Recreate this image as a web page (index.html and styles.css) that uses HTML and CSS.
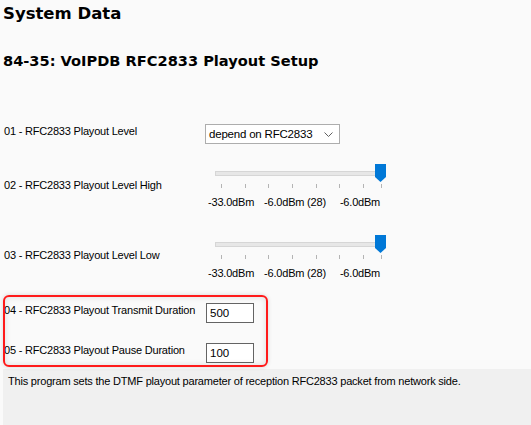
FILE: index.html
```html
<!DOCTYPE html>
<html lang="en">
<head>
  <meta charset="UTF-8">
  <meta name="viewport" content="width=device-width, initial-scale=1.0">
  <title>System Data</title>
  <link rel="stylesheet" href="styles.css">
</head>
<body>
  <div class="page">
    <h1>System Data</h1>
    <h2>84-35: VoIPDB RFC2833 Playout Setup</h2>

    <div class="form">
      <!-- 01 -->
      <div class="row row-select">
        <label class="label">01 - RFC2833 Playout Level</label>
        <div class="value">
          <div class="select">
            <span>depend on RFC2833</span>
            <svg class="chevron" width="9" height="5" viewBox="0 0 9 5">
              <path d="M0.5 0.5 L4.5 4.5 L8.5 0.5" fill="none" stroke="#606060" stroke-width="1"/>
            </svg>
          </div>
        </div>
      </div>

      <!-- 02 -->
      <div class="row row-slider">
        <label class="label">02 - RFC2833 Playout Level High</label>
        <div class="value">
          <div class="slider">
            <div class="track-wrap">
              <div class="track"></div>
              <div class="thumb"></div>
            </div>
            <div class="ticks">
              <span></span><span></span><span></span><span></span><span></span><span></span><span></span>
            </div>
            <div class="scale">
              <span class="s-min">-33.0dBm</span>
              <span class="s-cur">-6.0dBm (28)</span>
              <span class="s-max">-6.0dBm</span>
            </div>
          </div>
        </div>
      </div>

      <!-- 03 -->
      <div class="row row-slider low">
        <label class="label">03 - RFC2833 Playout Level Low</label>
        <div class="value">
          <div class="slider">
            <div class="track-wrap">
              <div class="track"></div>
              <div class="thumb"></div>
            </div>
            <div class="ticks">
              <span></span><span></span><span></span><span></span><span></span><span></span><span></span>
            </div>
            <div class="scale">
              <span class="s-min">-33.0dBm</span>
              <span class="s-cur">-6.0dBm (28)</span>
              <span class="s-max">-6.0dBm</span>
            </div>
          </div>
        </div>
      </div>

      <!-- 04 / 05 highlighted -->
      <div class="highlight">
        <div class="row row-input first">
          <label class="label">04 - RFC2833 Playout Transmit Duration</label>
          <div class="value"><input class="num" type="text" value="500"></div>
        </div>
        <div class="row row-input">
          <label class="label">05 - RFC2833 Playout Pause Duration</label>
          <div class="value"><input class="num" type="text" value="100"></div>
        </div>
      </div>
    </div>

    <div class="help">
      This program sets the DTMF playout parameter of reception RFC2833 packet from network side.
    </div>
  </div>
</body>
</html>
```

FILE: styles.css
```css
html, body {
  margin: 0;
  padding: 0;
  height: 100%;
  background-color: #fafafa;
}

body {
  font-family: "Liberation Sans", Arial, sans-serif;
  font-size: 11px;
  letter-spacing: -0.2px;
  color: #000000;
  overflow: hidden;
}

.page {
  padding-left: 3px;
  height: 100%;
  display: flex;
  flex-direction: column;
}

h1 {
  font-family: "DejaVu Sans", Verdana, sans-serif;
  font-size: 16.5px;
  font-weight: bold;
  letter-spacing: 0;
  line-height: 22px;
  margin: 3px 0 0 0;
}

h2 {
  font-family: "DejaVu Sans", Verdana, sans-serif;
  font-size: 14.6px;
  font-weight: bold;
  letter-spacing: 0;
  line-height: 20px;
  margin: 26px 0 0 0;
}

.form {
  margin-top: 42px;
}

.row {
  display: flex;
  align-items: flex-start;
}

.label {
  display: block;
  width: 202px;
  line-height: 16px;
  padding-left: 1px;
  flex-shrink: 0;
}

.row-select {
  height: 40px;
}

.row-select .label {
  padding-top: 10px;
}

.row-select .value {
  padding-top: 11px;
}

.select {
  width: 124px;
  height: 18px;
  border: 1px solid #adadad;
  background-color: #ffffff;
  display: flex;
  align-items: center;
  justify-content: space-between;
  padding: 0 6px 0 3px;
  font-size: 11.5px;
  box-sizing: content-box;
  margin-left: -1px;
}

.chevron {
  margin-top: 1px;
}

/* sliders */
.row-slider {
  height: 71px;
}

.row-slider .label {
  padding-top: 24px;
}

.row-slider.low .label {
  padding-top: 23px;
}

.row-slider .value {
  padding-top: 11px;
}

.slider {
  margin-left: 9px;
  width: 172px;
}

.track-wrap {
  position: relative;
  height: 18px;
}

.track {
  position: absolute;
  left: 0;
  right: 5px;
  top: 7px;
  height: 3px;
  background-color: #e7e7e7;
  border: 1px solid #d6d6d6;
}

.thumb {
  position: absolute;
  right: 1px;
  top: 0;
  width: 11px;
  height: 18px;
  background-color: #0078d7;
  clip-path: polygon(0 0, 100% 0, 100% 72%, 50% 100%, 0 72%);
}

.ticks {
  display: flex;
  justify-content: space-between;
  width: 143px;
  margin-left: 6px;
  margin-top: 2px;
  height: 4px;
  position: relative;
}

.ticks span {
  width: 1px;
  height: 4px;
  background-color: #b4b4b4;
}

.ticks::after {
  content: "";
  position: absolute;
  left: 160px;
  top: 0;
  width: 1px;
  height: 4px;
  background-color: #b4b4b4;
}

.scale {
  display: flex;
  margin-top: 7px;
  line-height: 14px;
  white-space: nowrap;
}

.s-min {
  margin-left: -7px;
}

.s-cur {
  margin-left: 10px;
}

.s-max {
  margin-left: 14px;
}

/* highlighted group */
.highlight {
  position: relative;
  margin-left: -3px;
  padding: 2px 0 2px 3px;
  width: 265px;
}

.highlight::after {
  content: "";
  position: absolute;
  left: 3px;
  top: 0;
  right: 0;
  bottom: 0;
  border: 2px solid #ff1a1a;
  border-radius: 6px;
  box-shadow: inset 0 0 6px rgba(0, 0, 0, 0.12), 0 0 4px rgba(0, 0, 0, 0.15);
  pointer-events: none;
}

.row-input {
  height: 28px;
}

.row-input.first {
  height: 40px;
}

.row-input .label {
  padding-top: 5px;
}

.row-input .value {
  padding-top: 6px;
}

.num {
  width: 40px;
  height: 18px;
  padding: 0 3px;
  border: 1px solid #646464;
  background-color: #ffffff;
  font-family: "Liberation Sans", Arial, sans-serif;
  font-size: 11.5px;
  color: #000000;
  box-sizing: content-box;
  outline: none;
}

/* help text panel */
.help {
  margin-top: 2px;
  flex: 1;
  background-color: #f0f0f0;
  padding: 5px 5px 0 5px;
  line-height: 14px;
}
```
